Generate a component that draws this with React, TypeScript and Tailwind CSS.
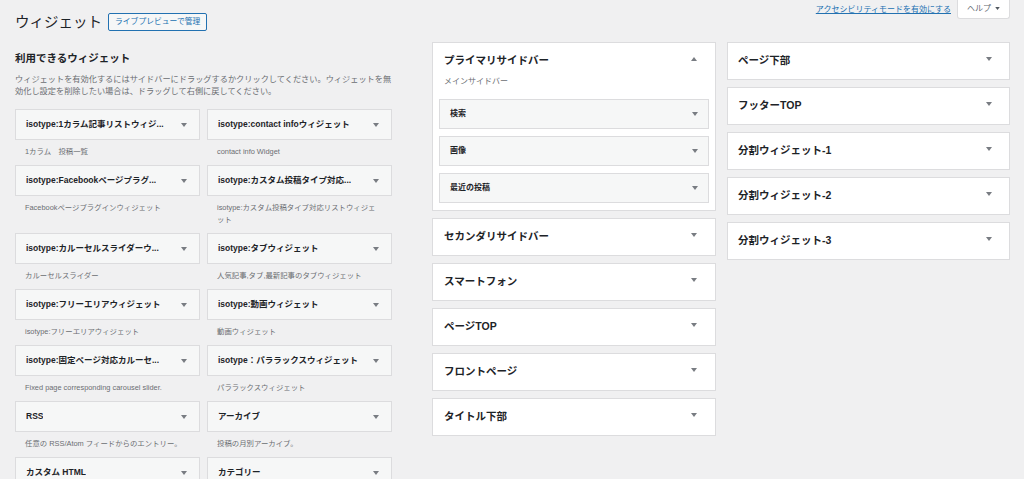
import React from 'react'

const available = [
  { title: 'isotype:1カラム記事リストウィジ...', desc: '1カラム　投稿一覧' },
  { title: 'isotype:contact infoウィジェット', desc: 'contact info Widget' },
  { title: 'isotype:Facebookページプラグ...', desc: 'Facebookページプラグインウィジェット' },
  { title: 'isotype:カスタム投稿タイプ対応...', desc: 'isotype:カスタム投稿タイプ対応リストウィジェット' },
  { title: 'isotype:カルーセルスライダーウ...', desc: 'カルーセルスライダー' },
  { title: 'isotype:タブウィジェット', desc: '人気記事,タブ,最新記事のタブウィジェット' },
  { title: 'isotype:フリーエリアウィジェット', desc: 'isotype:フリーエリアウィジェット' },
  { title: 'isotype:動画ウィジェット', desc: '動画ウィジェット' },
  { title: 'isotype:固定ページ対応カルーセ...', desc: 'Fixed page corresponding carousel slider.' },
  { title: 'isotype：パララックスウィジェット', desc: 'パララックスウィジェット' },
  { title: 'RSS', desc: '任意の RSS/Atom フィードからのエントリー。' },
  { title: 'アーカイブ', desc: '投稿の月別アーカイブ。' },
  { title: 'カスタム HTML', desc: '' },
  { title: 'カテゴリー', desc: '' },
]

const middleSidebars = ['セカンダリサイドバー', 'スマートフォン', 'ページTOP', 'フロントページ', 'タイトル下部']
const rightSidebars = ['ページ下部', 'フッターTOP', '分割ウィジェット-1', '分割ウィジェット-2', '分割ウィジェット-3']

function Arrow({ up = false }: { up?: boolean }) {
  return (
    <svg width="6" height="4" viewBox="0 0 6 4" className="shrink-0">
      {up ? <path d="M0 4h6L3 0z" fill="#787c82" /> : <path d="M0 0h6L3 4z" fill="#787c82" />}
    </svg>
  )
}

function SidebarBox({ title, pr }: { title: string; pr: string }) {
  return (
    <div className={`h-[38px] bg-white border border-[#dcdcde] flex items-center justify-between ${pr}`}>
      <span className="text-[10.5px] font-bold">{title}</span>
      <span className="-mt-[4px]">
        <Arrow />
      </span>
    </div>
  )
}

export default function App() {
  return (
    <div className="min-h-screen bg-[#f0f0f1] text-[#1d2327] font-['Liberation_Sans','Noto_Sans_CJK_JP',sans-serif]">
      {/* header */}
      <div className="h-[42px] flex justify-between items-start pl-[15px] pr-[14px]">
        <div className="flex items-center gap-[6px] pt-[12px]">
          <h1 className="text-[14.5px] leading-[20px] font-normal">ウィジェット</h1>
          <span className="h-[18px] px-[6px] flex items-center border border-[#2271b1] rounded-[2px] bg-[#f6f7f7] text-[#2271b1] text-[7.8px]">
            ライブプレビューで管理
          </span>
        </div>
        <div className="flex items-start gap-[6px]">
          <a className="text-[8px] leading-[12px] mt-[4px] text-[#2271b1] underline">アクセシビリティモードを有効にする</a>
          <span className="h-[20px] -mt-[1px] px-[9px] flex items-center gap-[4px] bg-white border border-t-0 border-[#dcdcde] rounded-b-[3px] text-[8px] text-[#646970]">
            ヘルプ
            <svg width="5" height="3" viewBox="0 0 6 4">
              <path d="M0 0h6L3 4z" fill="#50575e" />
            </svg>
          </span>
        </div>
      </div>

      {/* body */}
      <div className="flex items-start pl-[15px]">
        {/* available widgets */}
        <div className="w-[377px]">
          <h2 className="mt-[8px] text-[10.5px] leading-[16px] font-bold">利用できるウィジェット</h2>
          <p className="mt-[8px] text-[8.2px] leading-[12px] text-[#6b6e72]">
            ウィジェットを有効化するにはサイドバーにドラッグするかクリックしてください。ウィジェットを無効化し設定を削除したい場合は、ドラッグして右側に戻してください。
          </p>
          <div className="mt-[11px] grid grid-cols-[185px_185px] gap-x-[7px]">
            {available.map((w) => (
              <div key={w.title}>
                <div className="h-[31px] bg-[#f6f7f7] border border-[#dcdcde] flex items-center justify-between pl-[10px] pr-[12px]">
                  <span className="text-[8.5px] font-bold whitespace-nowrap overflow-hidden">{w.title}</span>
                  <Arrow />
                </div>
                <p className="mt-[6px] mb-[7px] min-h-[12px] pl-[10px] pr-[14px] text-[7.4px] leading-[12px] text-[#6b6e72]">
                  {w.desc}
                </p>
              </div>
            ))}
          </div>
        </div>

        {/* middle column */}
        <div className="ml-[40px] w-[284px] flex flex-col gap-[7px]">
          <div className="bg-white border border-[#dcdcde] px-[6px] pb-[7px]">
            <div className="h-[35px] flex items-center justify-between pl-[5px] pr-[12px]">
              <span className="text-[10.5px] font-bold">プライマリサイドバー</span>
              <span className="-mt-[3px]">
                <Arrow up />
              </span>
            </div>
            <p className="-mt-[2px] pl-[5px] text-[8px] leading-[12px] text-[#6b6e72]">メインサイドバー</p>
            <div className="mt-[11px] flex flex-col gap-[7px]">
              {['検索', '画像', '最近の投稿'].map((t) => (
                <div
                  key={t}
                  className="h-[30px] bg-[#f6f7f7] border border-[#dcdcde] flex items-center justify-between pl-[10px] pr-[10px]"
                >
                  <span className="text-[8px] font-bold">{t}</span>
                  <Arrow />
                </div>
              ))}
            </div>
          </div>
          {middleSidebars.map((t) => (
            <SidebarBox key={t} title={t} pr="pl-[11px] pr-[18px]" />
          ))}
        </div>

        {/* right column */}
        <div className="ml-[11px] w-[283px] flex flex-col gap-[7px]">
          {rightSidebars.map((t) => (
            <SidebarBox key={t} title={t} pr="pl-[10px] pr-[17px]" />
          ))}
        </div>
      </div>
    </div>
  )
}
